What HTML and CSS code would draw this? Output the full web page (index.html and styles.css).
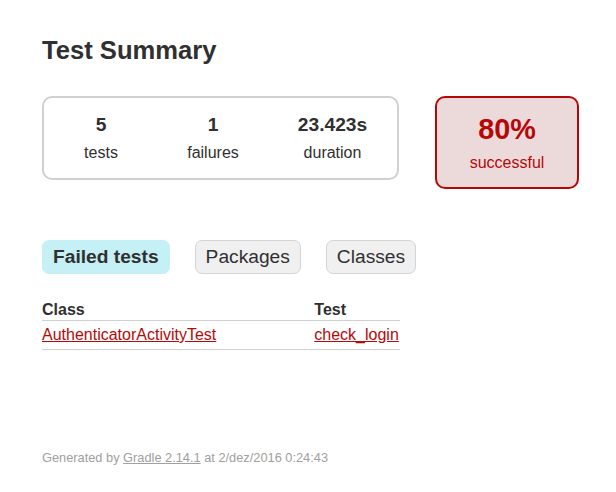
FILE: index.html
```html
<!DOCTYPE html>
<html>
<head>
<meta charset="utf-8">
<title>Test results - Test Summary</title>
<link rel="stylesheet" href="styles.css">
</head>
<body>
<div class="content">
  <h1 class="title">Test Summary</h1>
  <div class="summary">
    <div class="summary-group">
      <div class="info-box">
        <div class="counter">5</div>
        <p class="label">tests</p>
      </div>
      <div class="info-box">
        <div class="counter">1</div>
        <p class="label">failures</p>
      </div>
      <div class="info-box info-box-wide">
        <div class="counter">23.423s</div>
        <p class="label">duration</p>
      </div>
    </div>
    <div class="success-rate failures">
      <div class="percent">80%</div>
      <p class="label">successful</p>
    </div>
  </div>
  <ul class="tab-links">
    <li class="tab selected"><a href="#tab0">Failed tests</a></li>
    <li class="tab"><a href="#tab1">Packages</a></li>
    <li class="tab"><a href="#tab2">Classes</a></li>
  </ul>
  <div class="tab-panel">
    <table class="results">
      <thead>
        <tr><th>Class</th><th>Test</th></tr>
      </thead>
      <tbody>
        <tr>
          <td class="failures"><a href="#">AuthenticatorActivityTest</a></td>
          <td class="failures"><a href="#">check_login</a></td>
        </tr>
      </tbody>
    </table>
  </div>
  <div class="footer">
    <p class="footer-text">Generated by <a href="#">Gradle 2.14.1</a> at 2/dez/2016 0:24:43</p>
  </div>
</div>
</body>
</html>
```

FILE: styles.css
```css
html, body {
  margin: 0;
  padding: 0;
  background: #ffffff;
}
body {
  font-family: "Liberation Sans", Arial, sans-serif;
  font-size: 16px;
  color: #303030;
}
a, a:visited {
  color: #303030;
}
.content {
  padding: 36px 42px 30px 42px;
}
.title {
  font-size: 25.6px;
  font-weight: bold;
  margin: 0;
  white-space: nowrap;
}
.summary {
  display: flex;
  align-items: flex-start;
  margin-top: 31px;
}
.summary-group {
  display: flex;
  flex-shrink: 0;
  border: solid 2px #d0d0d0;
  border-radius: 10px;
  padding: 0 1px;
}
.info-box {
  width: 110px;
  padding: 16px 1px 16px 1px;
  text-align: center;
}
.info-box-wide {
  width: 125px;
}
.counter {
  font-size: 19.2px;
  font-weight: bold;
  margin-bottom: 8px;
}
.label {
  margin: 0;
}
.success-rate {
  flex-shrink: 0;
  width: 140px;
  margin-left: 36px;
  padding: 15px 0;
  text-align: center;
  border: solid 2px #d0d0d0;
  border-radius: 10px;
}
.percent {
  font-size: 28.8px;
  font-weight: bold;
  margin-bottom: 8px;
}
.failures, .failures a, .failures a:visited {
  color: #b60808;
}
.success-rate.failures {
  background-color: #ecdada;
  border-color: #b60808;
}
.tab-links {
  display: flex;
  list-style: none;
  margin: 51px 0 26px 0;
  padding: 0;
}
.tab {
  padding: 5px 10px;
  margin-right: 25px;
  border: solid 1px #d4d4d4;
  border-radius: 7px;
  background-color: #f0f0f0;
}
.tab a {
  font-size: 19.2px;
  display: block;
  text-decoration: none;
}
.tab.selected {
  background-color: #c5f0f5;
  border-color: #c5f0f5;
}
.tab.selected a {
  font-weight: bold;
}
.results {
  min-width: 350px;
  border-collapse: collapse;
  border-bottom: solid #d0d0d0 1px;
}
.results th {
  text-align: left;
  white-space: nowrap;
  padding: 1px 1px 1px 98px;
  border-bottom: solid #d0d0d0 1px;
}
.results td {
  white-space: nowrap;
  padding: 5px 1px 5px 98px;
}
.results th:first-child, .results td:first-child {
  padding-left: 0;
  padding-right: 0;
}
.footer {
  margin-top: 100px;
  font-size: 12.8px;
  white-space: nowrap;
}
.footer-text {
  margin: 0;
}
.footer, .footer a {
  color: #a0a0a0;
}
```
